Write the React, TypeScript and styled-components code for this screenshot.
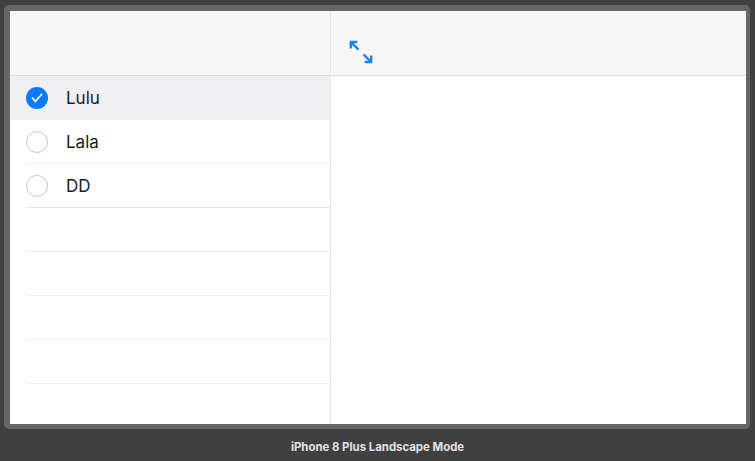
import React from "react";
import styled, { createGlobalStyle } from "styled-components";

const Global = createGlobalStyle`
  html, body { margin: 0; padding: 0; background: #404040; }
  body { width: 755px; height: 461px; overflow: hidden; font-family: "Inter", "Liberation Sans", sans-serif; }
`;

const Stage = styled.div`
  width: 755px;
  height: 461px;
  display: flex;
  flex-direction: column;
  background: #404040;
`;

const Device = styled.div`
  margin: 5px 5px 0 4px;
  height: 424px;
  box-sizing: border-box;
  border-style: solid;
  border-color: #666666;
  border-width: 6px 4px 5px 6px;
  border-radius: 5px;
  background: #ffffff;
  display: flex;
  overflow: hidden;
`;

const Sidebar = styled.div`
  width: 320px;
  display: flex;
  flex-direction: column;
  border-right: 1px solid #e6e6e8;
`;

const Detail = styled.div`
  flex: 1;
  display: flex;
  flex-direction: column;
`;

const NavBar = styled.div`
  height: 65px;
  flex: none;
  box-sizing: border-box;
  background: #f6f6f7;
  border-bottom: 1px solid #dcdcde;
  display: flex;
  align-items: flex-end;
  padding: 0 0 11px 18px;
`;

const List = styled.div`
  display: flex;
  flex-direction: column;
`;

const Row = styled.div<{ $selected?: boolean }>`
  height: 44px;
  display: flex;
  align-items: stretch;
  background: ${(p) => (p.$selected ? "#efeff4" : "#ffffff")};
  padding-left: 16px;
`;

const RowInner = styled.div<{ $line: string }>`
  flex: 1;
  display: flex;
  align-items: center;
  box-sizing: border-box;
  border-bottom: 1px solid ${(p) => p.$line};
`;

const Check = styled.div<{ $on?: boolean }>`
  width: 22px;
  height: 22px;
  box-sizing: border-box;
  border-radius: 50%;
  border: ${(p) => (p.$on ? "none" : "1.5px solid #c7c7cc")};
  background: ${(p) => (p.$on ? "#0a7aff" : "#ffffff")};
  display: flex;
  align-items: center;
  justify-content: center;
`;

const Label = styled.span`
  margin-left: 18px;
  font-size: 17px;
  color: #1c1c1e;
`;

const Caption = styled.div`
  flex: 1;
  display: flex;
  align-items: center;
  justify-content: center;
  color: #e2e2e2;
  font-family: "Inter", "Liberation Sans", sans-serif;
  font-weight: 700;
  font-size: 11.4px;
  padding-top: 3px;
`;

const ExpandIcon = () => (
  <svg width="24" height="24" viewBox="0 0 24 24" fill="none" stroke="#1a82fb" strokeWidth="2.4" strokeLinecap="butt" strokeLinejoin="miter">
    <path d="M1.8 2 L9.5 9.7" />
    <path d="M1.8 8.5 V2 H8.3" />
    <path d="M14.5 14.3 L22.2 22" />
    <path d="M22.2 15.5 V22 H15.7" />
  </svg>
);

const CheckMark = () => (
  <svg width="12" height="10" viewBox="0 0 12 10" fill="none" stroke="#ffffff" strokeWidth="1.7" strokeLinecap="round" strokeLinejoin="round">
    <path d="M1.5 5.2 L4.5 8.3 L10.5 1.5" />
  </svg>
);

const items = [
  { name: "Lulu", on: true },
  { name: "Lala", on: false },
  { name: "DD", on: false },
];

export default function App() {
  return (
    <>
      <Global />
      <Stage>
        <Device>
          <Sidebar>
            <NavBar />
            <List>
              {items.map((it, i) => (
                <Row key={it.name} $selected={it.on}>
                  <RowInner $line={it.on ? "transparent" : i === 2 ? "#e4e4e6" : "#efeff0"}>
                    <Check $on={it.on}>{it.on && <CheckMark />}</Check>
                    <Label>{it.name}</Label>
                  </RowInner>
                </Row>
              ))}
              {[0, 1, 2, 3].map((k) => (
                <Row key={k}>
                  <RowInner $line={k === 0 ? "#e8e8ea" : "#efeff0"} />
                </Row>
              ))}
            </List>
          </Sidebar>
          <Detail>
            <NavBar>
              <ExpandIcon />
            </NavBar>
          </Detail>
        </Device>
        <Caption>iPhone 8 Plus Landscape Mode</Caption>
      </Stage>
    </>
  );
}
